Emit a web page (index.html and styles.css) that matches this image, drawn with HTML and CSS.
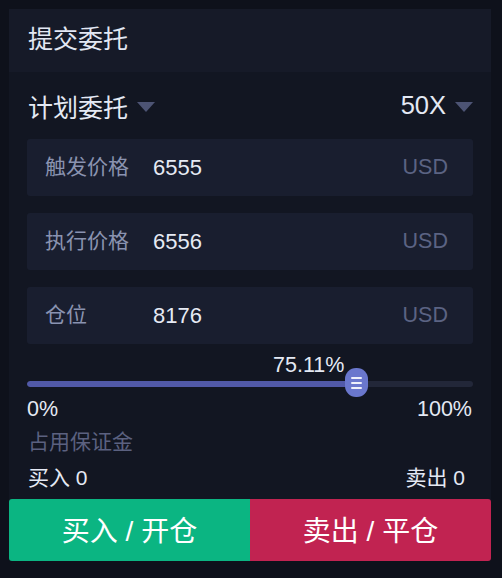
FILE: index.html
```html
<!DOCTYPE html>
<html lang="zh">
<head>
<meta charset="utf-8">
<link rel="stylesheet" href="styles.css">
</head>
<body>
<div class="panel">
  <div class="header">提交委托</div>
  <div class="body">
    <div class="type-row">
      <div class="select">计划委托<span class="caret"></span></div>
      <div class="select lev">50X<span class="caret"></span></div>
    </div>
    <div class="fields">
      <div class="field"><span class="label">触发价格</span><span class="value">6555</span><span class="unit">USD</span></div>
      <div class="field"><span class="label">执行价格</span><span class="value">6556</span><span class="unit">USD</span></div>
      <div class="field"><span class="label">仓位</span><span class="value">8176</span><span class="unit">USD</span></div>
    </div>
    <div class="slider">
      <div class="slider-value"><span class="pct">75.11%</span></div>
      <div class="slider-row">
        <div class="track"><div class="fill" style="width: 73.8%"></div></div>
        <div class="thumb" style="left: calc(73.8% - 11px)"><i></i><i></i><i></i></div>
      </div>
      <div class="scale"><span>0%</span><span>100%</span></div>
    </div>
    <div class="margin-label">占用保证金</div>
    <div class="amounts"><span>买入 0</span><span class="sell-amt">卖出 0</span></div>
  </div>
  <div class="actions">
    <button class="btn buy">买入 / 开仓</button>
    <button class="btn sell">卖出 / 平仓</button>
  </div>
</div>
</body>
</html>
```

FILE: styles.css
```css
* { box-sizing: border-box; }
html, body {
  margin: 0;
  padding: 0;
  background: #0e111b;
}
body {
  font-family: "Liberation Sans", "Noto Sans CJK SC", sans-serif;
  color: #e4e9f4;
  width: 502px;
  height: 578px;
  overflow: hidden;
}
.panel {
  margin: 9px 0 0 9px;
  width: 482px;
  background: #121622;
  border-radius: 3px;
}
.header {
  height: 63px;
  background: #161a28;
  padding-left: 19px;
  font-size: 25px;
  line-height: 61px;
  color: #e2e7f3;
}
.body {
  padding: 0 18px;
}
.type-row {
  height: 67px;
  display: flex;
  justify-content: space-between;
  align-items: center;
  padding-left: 1px;
  padding-right: 0;
}
.select {
  display: flex;
  align-items: center;
  font-size: 25px;
  color: #e4e9f4;
}
.lev { font-size: 25.5px; }
.caret {
  display: inline-block;
  width: 0;
  height: 0;
  border-left: 9px solid transparent;
  border-right: 9px solid transparent;
  border-top: 10px solid #4d5474;
  margin-left: 9px;
  margin-top: 2px;
}
.fields {
  display: flex;
  flex-direction: column;
  gap: 17px;
}
.field {
  height: 57px;
  background: #191e2f;
  border-radius: 3px;
  display: flex;
  align-items: center;
  padding: 0 25px 0 18px;
  font-size: 21px;
}
.label {
  width: 108px;
  color: #8a93b0;
  padding-bottom: 6px;
}
.value {
  flex: 1;
  color: #e6eaf4;
  font-size: 22px;
}
.unit {
  color: #5b6383;
  font-size: 21.5px;
}
.slider {
  margin-top: 9px;
}
.slider-value {
  height: 15px;
  line-height: 24px;
  font-size: 21.5px;
  padding-left: 246px;
  color: #e4e9f4;
}
.slider-row {
  position: relative;
  height: 29px;
  padding-top: 13px;
}
.track {
  height: 6px;
  border-radius: 3px;
  background: #222739;
  overflow: hidden;
}
.fill {
  height: 100%;
  background: #5159a8;
  border-radius: 3px 0 0 3px;
}
.thumb {
  position: absolute;
  top: 0;
  width: 23px;
  height: 29px;
  border-radius: 11px;
  background: #6a77cd;
  display: flex;
  flex-direction: column;
  align-items: center;
  justify-content: center;
  gap: 3px;
}
.thumb i {
  display: block;
  width: 11px;
  height: 2px;
  background: #eef0fb;
  border-radius: 1px;
}
.scale {
  display: flex;
  justify-content: space-between;
  font-size: 21.5px;
  line-height: 24px;
  height: 24px;
  padding-right: 1px;
}
.margin-label {
  margin-top: 10px;
  height: 24px;
  line-height: 22px;
  font-size: 21px;
  color: #5b6180;
  padding-left: 1px;
}
.amounts {
  margin-top: 11px;
  height: 24px;
  line-height: 24px;
  display: flex;
  justify-content: space-between;
  font-size: 21px;
  padding: 0 8px 0 1px;
}
.actions {
  margin-top: 9px;
  display: flex;
  height: 62px;
}
.btn {
  flex: 1;
  border: none;
  margin: 0;
  padding: 0 0 2px;
  font-family: "Liberation Sans", "Noto Sans CJK SC", sans-serif;
  font-size: 28px;
  color: #ffffff;
  cursor: pointer;
}
.buy {
  background: #0bb582;
  border-radius: 3px 0 0 3px;
}
.sell {
  background: #c12351;
  border-radius: 0 3px 3px 0;
}
```
